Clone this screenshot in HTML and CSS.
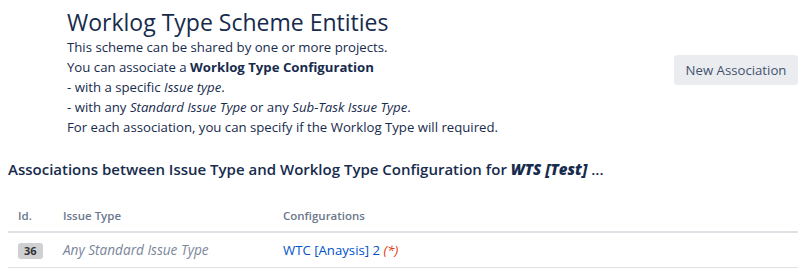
FILE: index.html
```html
<!DOCTYPE html>
<html lang="en">

<head>
    <meta charset="UTF-8" />
    <title>Worklog Type Scheme Entities</title>
    <link rel="stylesheet" href="styles.css">
</head>

<body>

    <!-- PAGE HEADER -->
    <header class="page-header">
        <div class="header-main">
            <h1>Worklog Type Scheme Entities</h1>
            <p>This scheme can be shared by one or more projects.</p>
            <p>You can associate a <strong>Worklog Type Configuration</strong></p>
            <p>- with a specific <em>Issue type</em>.</p>
            <p>- with any <em>Standard Issue Type</em> or any <em>Sub-Task Issue Type</em>.</p>
            <p>For each association, you can specify if the Worklog Type will required.</p>
        </div>
        <div class="header-actions">
            <button class="btn">New Association</button>
        </div>
    </header>

    <!-- ASSOCIATIONS -->
    <h2 class="section-title">Associations between Issue Type and Worklog Type Configuration for <em><strong>WTS [Test]</strong></em> ...</h2>

    <table class="assoc-table">
        <thead>
            <tr>
                <th class="col-id">Id.</th>
                <th class="col-type">Issue Type</th>
                <th>Configurations</th>
            </tr>
        </thead>
        <tbody>
            <tr>
                <td class="col-id"><span class="badge">36</span></td>
                <td class="col-type"><em class="muted">Any Standard Issue Type</em></td>
                <td><a href="#">WTC [Anaysis] 2</a> <em class="required">(*)</em></td>
            </tr>
        </tbody>
    </table>

</body>

</html>
```

FILE: styles.css
```css
* {
    box-sizing: border-box;
}

body {
    margin: 0;
    padding: 0 3px 0 8px;
    font-family: "Open Sans", sans-serif;
    font-size: 13.2px;
    color: #172b4d;
    background: #fff;
}

/* --- PAGE HEADER --- */
.page-header {
    display: flex;
    align-items: center;
    justify-content: space-between;
    padding: 8px 0 0 59px;
}

.page-header h1 {
    margin: 0 0 1px;
    font-size: 23px;
    font-weight: 500;
    line-height: 28px;
}

.page-header p {
    margin: 0;
    line-height: 20px;
}

.header-actions {
    margin-bottom: 6px;
}

.btn {
    font-family: inherit;
    font-size: 13.2px;
    color: #42526e;
    background: #ebecf0;
    border: none;
    border-radius: 3px;
    padding: 0 10px;
    height: 30px;
    width: 124px;
}

/* --- ASSOCIATIONS --- */
.section-title {
    margin: 20px 0 0;
    font-size: 15px;
    font-weight: 600;
    line-height: 24px;
}

.assoc-table {
    width: 100%;
    margin-top: 23px;
    border-collapse: collapse;
}

.assoc-table th {
    text-align: left;
    font-size: 11.5px;
    font-weight: 600;
    color: #6b778c;
    padding: 4px 10px 8px;
    border-bottom: 2px solid #dfe1e6;
}

.assoc-table td {
    padding: 7px 10px;
    border-bottom: 1px solid #dfe1e6;
    line-height: 20px;
}

.assoc-table .col-id {
    width: 45px;
}

.assoc-table .col-type {
    width: 220px;
}

.badge {
    display: inline-block;
    background: #cfd0d2;
    color: #333;
    font-size: 11px;
    font-weight: 700;
    line-height: 16px;
    padding: 0 6px;
    border-radius: 3px;
}

.muted {
    color: #7a869a;
    font-size: 13.6px;
}

.assoc-table a {
    color: #0052cc;
    text-decoration: none;
}

.required {
    color: #de350b;
}
```
